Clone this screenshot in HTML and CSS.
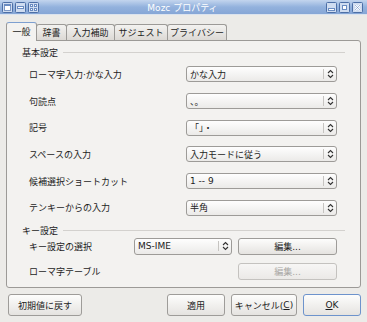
FILE: index.html
```html
<!doctype html>
<html lang="ja">
<head>
    <meta charset="utf-8">
    <title>Mozc プロパティ</title>
    <link rel="stylesheet" href="styles.css">
</head>
<body>
<div class="titlebar">
    <div class="tb-icons">
        <svg width="11" height="11" viewBox="0 0 11 11"><rect x=".5" y=".5" width="10" height="10" rx="1" fill="#cfdcf0" stroke="#4d6fa6"/><rect x="2.5" y="2.5" width="6" height="6" fill="#fff" stroke="#7c98c6"/><rect x="2" y="2" width="7" height="2" fill="#6a8cc2"/></svg>
        <svg width="11" height="11" viewBox="0 0 11 11"><rect x=".5" y=".5" width="10" height="10" rx="1" fill="#cfdcf0" stroke="#4d6fa6"/><rect x="2.5" y="4.5" width="6" height="2" fill="#fff" stroke="#6a8cc2"/></svg>
        <svg width="11" height="11" viewBox="0 0 11 11"><rect x=".5" y=".5" width="10" height="10" rx="1" fill="#cfdcf0" stroke="#4d6fa6"/><rect x="2.5" y="2.5" width="2" height="2" fill="#fff" stroke="#6a8cc2"/><rect x="6.5" y="2.5" width="2" height="2" fill="#fff" stroke="#6a8cc2"/><rect x="2.5" y="6.5" width="2" height="2" fill="#fff" stroke="#6a8cc2"/><rect x="6.5" y="6.5" width="2" height="2" fill="#fff" stroke="#6a8cc2"/></svg>
    </div>
    <div class="title">Mozc プロパティ</div>
    <div class="tb-icons">
        <svg width="11" height="11" viewBox="0 0 11 11"><rect x=".5" y=".5" width="10" height="10" rx="1" fill="#cfdcf0" stroke="#4d6fa6"/><rect x="2.5" y="6.5" width="6" height="2" fill="#fff" stroke="#6a8cc2"/></svg>
        <svg width="11" height="11" viewBox="0 0 11 11"><rect x=".5" y=".5" width="10" height="10" rx="1" fill="#cfdcf0" stroke="#4d6fa6"/><rect x="3.5" y="3.5" width="4" height="4" fill="#fff" stroke="#6a8cc2"/></svg>
        <svg width="11" height="11" viewBox="0 0 11 11"><rect x=".5" y=".5" width="10" height="10" rx="1" fill="#cfdcf0" stroke="#4d6fa6"/><path d="M3 3 L8 8 M8 3 L3 8" stroke="#fff" stroke-width="2"/><path d="M3 3 L8 8 M8 3 L3 8" stroke="#6a8cc2" stroke-width=".6"/></svg>
    </div>
</div>

<div class="tabs">
    <div class="tab active">一般</div>
    <div class="tab">辞書</div>
    <div class="tab">入力補助</div>
    <div class="tab">サジェスト</div>
    <div class="tab">プライバシー</div>
</div>

<div class="panel">
    <div class="group-title"><span>基本設定</span><div class="line"></div></div>
    <div class="rows">
        <div class="row"><span class="label">ローマ字入力·かな入力</span><div class="combo"><span class="combo-text">かな入力</span><span class="combo-arrow"><svg width="7" height="10" viewBox="0 0 7 10"><path d="M1 4 L3.5 1.5 L6 4 M1 6 L3.5 8.5 L6 6" fill="none" stroke="#333" stroke-width="1.1"/></svg></span></div></div>
        <div class="row"><span class="label">句読点</span><div class="combo"><span class="combo-text">、。</span><span class="combo-arrow"><svg width="7" height="10" viewBox="0 0 7 10"><path d="M1 4 L3.5 1.5 L6 4 M1 6 L3.5 8.5 L6 6" fill="none" stroke="#333" stroke-width="1.1"/></svg></span></div></div>
        <div class="row"><span class="label">記号</span><div class="combo"><span class="combo-text">「」・</span><span class="combo-arrow"><svg width="7" height="10" viewBox="0 0 7 10"><path d="M1 4 L3.5 1.5 L6 4 M1 6 L3.5 8.5 L6 6" fill="none" stroke="#333" stroke-width="1.1"/></svg></span></div></div>
        <div class="row"><span class="label">スペースの入力</span><div class="combo"><span class="combo-text">入力モードに従う</span><span class="combo-arrow"><svg width="7" height="10" viewBox="0 0 7 10"><path d="M1 4 L3.5 1.5 L6 4 M1 6 L3.5 8.5 L6 6" fill="none" stroke="#333" stroke-width="1.1"/></svg></span></div></div>
        <div class="row"><span class="label">候補選択ショートカット</span><div class="combo"><span class="combo-text">1 -- 9</span><span class="combo-arrow"><svg width="7" height="10" viewBox="0 0 7 10"><path d="M1 4 L3.5 1.5 L6 4 M1 6 L3.5 8.5 L6 6" fill="none" stroke="#333" stroke-width="1.1"/></svg></span></div></div>
        <div class="row"><span class="label">テンキーからの入力</span><div class="combo"><span class="combo-text">半角</span><span class="combo-arrow"><svg width="7" height="10" viewBox="0 0 7 10"><path d="M1 4 L3.5 1.5 L6 4 M1 6 L3.5 8.5 L6 6" fill="none" stroke="#333" stroke-width="1.1"/></svg></span></div></div>
    </div>

    <div class="group-title second"><span>キー設定</span><div class="line"></div></div>
    <div class="key-rows">
        <span class="label">キー設定の選択</span>
        <div class="combo small"><span class="combo-text">MS-IME</span><span class="combo-arrow"><svg width="7" height="10" viewBox="0 0 7 10"><path d="M1 4 L3.5 1.5 L6 4 M1 6 L3.5 8.5 L6 6" fill="none" stroke="#333" stroke-width="1.1"/></svg></span></div>
        <div class="btn edit">編集...</div>
        <span class="label">ローマ字テーブル</span>
        <div></div>
        <div class="btn edit disabled">編集...</div>
    </div>
</div>

<div class="footer">
    <div class="btn reset">初期値に戻す</div>
    <div class="footer-right">
        <div class="btn">適用</div>
        <div class="btn wide">キャンセル(<u>C</u>)</div>
        <div class="btn ok"><u>O</u>K</div>
    </div>
</div>
</body>
</html>
```

FILE: styles.css
```css
body {
    margin: 0;
    width: 367px;
    height: 322px;
    overflow: hidden;
    background-color: #ecebe8;
    font-family: "DejaVu Sans", "Noto Sans CJK JP", sans-serif;
    font-size: 9px;
    color: #1c1c1c;
}
.titlebar {
    height: 14px;
    display: flex;
    align-items: center;
    padding: 0 4px 0 2px;
    background: linear-gradient(#c3d5ee, #93b2dd 50%, #86a6d6);
    border-bottom: 1px solid #dbe3ee;
}
.tb-icons {
    display: flex;
    gap: 2px;
    width: 37px;
}
.tb-icons svg {
    display: block;
}
.title {
    flex: 1;
    text-align: center;
    color: #fff;
}
.tabs {
    display: flex;
    align-items: flex-end;
    height: 18px;
    margin: 7px 0 0 6px;
    position: relative;
    z-index: 1;
}
.tab {
    height: 16px;
    line-height: 16px;
    text-align: center;
    white-space: nowrap;
    margin-right: -1px;
    border: 1px solid #9c9a97;
    border-bottom: none;
    border-radius: 3px 3px 0 0;
    background: linear-gradient(#f3f2f0, #dcd9d5);
    box-sizing: border-box;
}
.tab:nth-child(1), .tab:nth-child(2) {
    width: 31px;
}
.tab:nth-child(3) {
    width: 49px;
}
.tab:nth-child(4) {
    width: 54px;
}
.tab:nth-child(5) {
    width: 60px;
}
.tab.active {
    height: 19px;
    line-height: 18px;
    margin-bottom: -1px;
    background: #f3f2f0;
    border-top-color: #7d9fd0;
}
.panel {
    height: 248px;
    margin: 0 6px;
    box-sizing: border-box;
    padding: 5px 15px 0 15px;
    border: 1px solid #9c9a97;
    border-radius: 0 3px 3px 3px;
    background-color: #f3f2f0;
}
.group-title {
    height: 12px;
    display: flex;
    align-items: center;
    gap: 5px;
}
.group-title.second {
    margin-top: 3px;
}
.line {
    flex: 1;
    border-top: 1px solid #d3d1ce;
}
.rows {
    margin-top: 3px;
    padding: 0 8px 0 7px;
}
.row {
    height: 26.7px;
    display: flex;
    align-items: center;
}
.label {
    flex: 1;
}
.combo {
    width: 151px;
    height: 16px;
    box-sizing: border-box;
    display: flex;
    align-items: center;
    border: 1px solid #9d9b98;
    border-radius: 3px;
    background: linear-gradient(#fefefe, #ebeae8);
}
.combo.small {
    width: 98px;
    height: 17px;
}
.combo-text {
    flex: 1;
    padding-left: 3px;
}
.combo-arrow {
    width: 12px;
    height: 10px;
    display: flex;
    justify-content: center;
    border-left: 1px solid #c6c4c1;
}
.key-rows {
    display: grid;
    grid-template-columns: 99px 98px 99px;
    grid-template-rows: 20px 20px;
    column-gap: 6px;
    row-gap: 5.5px;
    align-items: center;
    padding-left: 7px;
}
.btn {
    height: 22px;
    box-sizing: border-box;
    display: flex;
    align-items: center;
    justify-content: center;
    border: 1px solid #9e9c99;
    border-radius: 3px;
    background: linear-gradient(#fdfdfc, #e5e3e0);
    width: 58px;
}
.btn.edit {
    width: 99px;
    height: 17px;
}
.btn.disabled {
    color: #a9a7a4;
    border-color: #c4c2bf;
    background: linear-gradient(#f7f6f5, #ebe9e7);
}
.btn.reset {
    width: 74px;
}
.btn.wide {
    width: 66px;
}
.btn.ok {
    border-color: #6d93cc;
}
.footer {
    display: flex;
    justify-content: space-between;
    margin-top: 6px;
    padding: 0 6px 0 8px;
}
.footer-right {
    display: flex;
    gap: 6px;
}
```
